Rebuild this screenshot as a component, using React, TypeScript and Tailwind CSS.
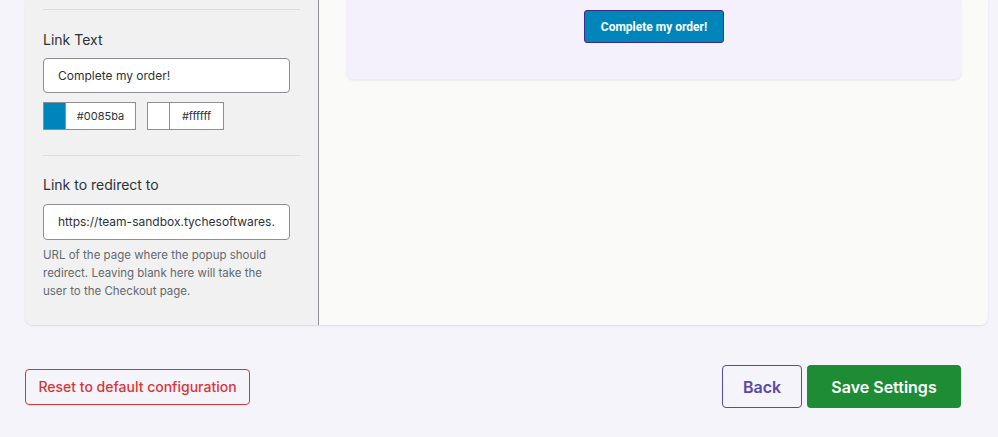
import React from 'react';

function ColorField({ color, label, width }: { color: string; label: string; width: string }) {
  return (
    <div className={`flex h-[28px] ${width} border border-[#8c8f94] bg-white`}>
      <div className="w-[22px] h-full border-r border-[#8c8f94]" style={{ backgroundColor: color }} />
      <div className="flex-1 flex items-center justify-center text-[11px] text-[#2c3338]">{label}</div>
    </div>
  );
}

export default function App() {
  return (
    <div className="min-h-[437px] bg-[#f5f4fa] font-['Inter','Noto_Sans',sans-serif]">
      <div className="ml-[25px] w-[963px] flex rounded-b-lg shadow-[0_1px_2px_rgba(0,0,0,0.1)] overflow-hidden">
        <div className="w-[294px] bg-[#f1f1f1] border-r border-[#8c8f94] px-[18px] pt-[9px] pb-[25px]">
          <div className="border-t border-[#dcdcde]" />
          <div className="mt-[20px] text-[14px] leading-[20px] text-[#2c3338]">Link Text</div>
          <div className="mt-[8px] w-[247px] h-[35px] rounded border border-[#8c8f94] bg-white flex items-center px-[14px] text-[12px] text-[#2c3338]">
            Complete my order!
          </div>
          <div className="mt-[9px] flex gap-[11px]">
            <ColorField color="#0085ba" label="#0085ba" width="w-[93px]" />
            <ColorField color="#ffffff" label="#ffffff" width="w-[77px]" />
          </div>
          <div className="mt-[25px] border-t border-[#dcdcde]" />
          <div className="mt-[19px] text-[14px] leading-[20px] text-[#2c3338]">Link to redirect to</div>
          <div className="mt-[9px] w-[247px] h-[36px] rounded border border-[#8c8f94] bg-white flex items-center px-[14px] text-[12px] text-[#2c3338]">
            <span className="block overflow-hidden whitespace-nowrap">https://team-sandbox.tychesoftwares.com</span>
          </div>
          <p className="mt-[6px] w-[232px] text-[11.5px] leading-[18px] text-[#646970]">
            URL of the page where the popup should redirect. Leaving blank here will take the user to the Checkout page.
          </p>
        </div>
        <div className="flex-1 bg-[#fafaf9] pl-[27px] pr-[26px]">
          <div className="h-[79px] rounded-b-lg bg-[#f4f1fd] shadow-[0_2px_2px_rgba(0,0,0,0.06)] flex justify-center pt-[10px]">
            <div className="h-[33px] px-[16px] flex items-center rounded-[3px] border border-[#3d2a8c] bg-[#0085ba] text-white text-[12px] font-bold font-['Roboto',sans-serif]">
              Complete my order!
            </div>
          </div>
        </div>
      </div>
      <div className="mt-[40px] mx-[25px] w-[936px] flex items-center justify-between">
        <button className="h-[36px] w-[225px] rounded border border-[#d63638] text-[#d63638] text-[14px] font-medium">
          Reset to default configuration
        </button>
        <div className="flex gap-[5px]">
          <button className="h-[43px] w-[80px] rounded border border-[#5b48a2] text-[#5b48a2] text-[16px] font-semibold">
            Back
          </button>
          <button className="h-[43px] w-[154px] rounded bg-[#1e8c35] text-white text-[16px] font-semibold">
            Save Settings
          </button>
        </div>
      </div>
    </div>
  );
}
